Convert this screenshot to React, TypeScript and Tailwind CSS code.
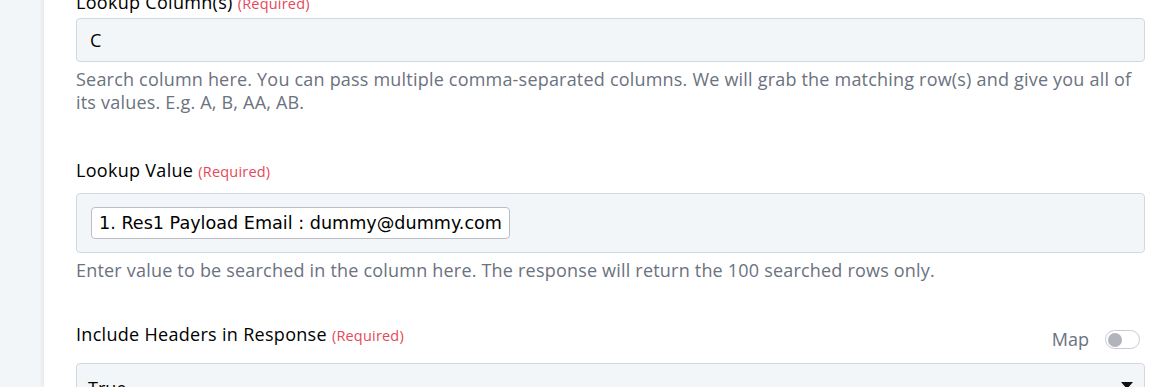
import React from "react";

function Req() {
  return <span className="text-[14.5px] text-[#e5485a] ml-[5px] tracking-[0.2px]">(Required)</span>;
}

export default function App() {
  return (
    <div className="flex h-[387px] w-[1159px] overflow-hidden bg-[#f3f6f9] font-['Open_Sans',sans-serif]">
      <div className="w-[44px] shrink-0 bg-[#f3f6f9]" />
      <div className="flex-1 bg-white shadow-[-2px_0_4px_rgba(0,0,0,0.06)] pl-[32px] pr-[14px] -mt-[9px]">
        <div className="h-[18px] text-[18px] leading-[22px] tracking-[0.3px] text-black">
          Lookup Column(s)<Req />
        </div>
        <div className="mt-[9px] h-[44px] rounded-[4px] border border-[#d3d8e0] bg-[#f3f6f9] flex items-center px-[13px] text-[18px] text-black">
          C
        </div>
        <p className="mt-[6px] text-[18px] leading-[23px] tracking-[0.2px] text-[#6b7280]">
          Search column here. You can pass multiple comma-separated columns. We will grab the matching row(s) and give you all of its values. E.g. A, B, AA, AB.
        </p>
        <div className="mt-[45px] text-[18px] leading-[22px] tracking-[0.3px] text-black">
          Lookup Value<Req />
        </div>
        <div className="mt-[10px] h-[60px] rounded-[4px] border border-[#d3d8e0] bg-[#f3f6f9] flex items-center px-[14px]">
          <span className="rounded-[4px] border border-[#b9bec6] bg-white px-[7px] h-[32px] flex items-center text-[17.6px] text-black font-['DejaVu_Sans',sans-serif]">
            1. Res1 Payload Email : dummy@dummy.com
          </span>
        </div>
        <p className="mt-[6px] text-[18px] leading-[23px] tracking-[0.2px] text-[#6b7280]">
          Enter value to be searched in the column here. The response will return the 100 searched rows only.
        </p>
        <div className="mt-[41px] flex items-end justify-between">
          <div className="text-[18px] leading-[22px] tracking-[0.3px] text-black">
            Include Headers in Response<Req />
          </div>
          <div className="flex items-center gap-[16px] pr-[5px] -mb-[6px]">
            <span className="text-[18px] text-[#6b7280]">Map</span>
            <span className="w-[35px] h-[19px] rounded-full border border-[#c7ccd3] bg-white flex items-center px-[2px]">
              <span className="w-[14px] h-[14px] rounded-full bg-[#b1b5bb]" />
            </span>
          </div>
        </div>
        <div className="mt-[16px] h-[44px] rounded-[4px] border border-[#d3d8e0] bg-[#f3f6f9] flex items-start justify-between px-[11px] pt-[11px] text-[18px] text-black">
          <span>True</span>
          <svg width="12" height="8" viewBox="0 0 12 8" className="mt-[7px]"><path d="M0 0 L12 0 L6 7 Z" fill="#111" /></svg>
        </div>
      </div>
    </div>
  );
}
